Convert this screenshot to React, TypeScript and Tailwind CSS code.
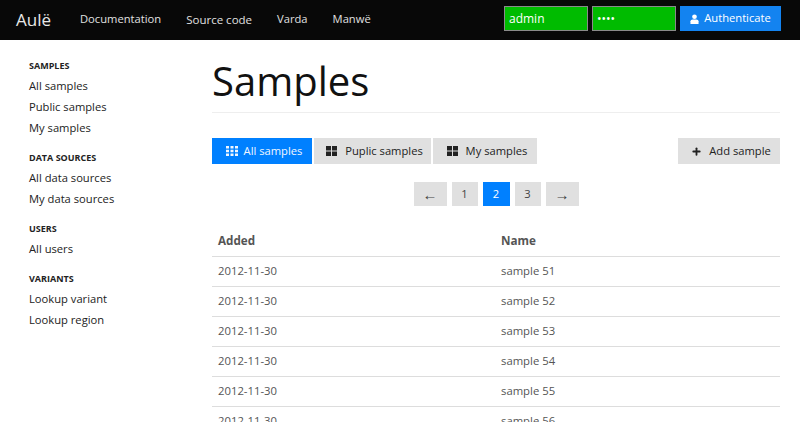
import { Plus } from 'lucide-react';

const font = "font-['Open_Sans',sans-serif]";

const sidebar = [
  { title: 'Samples', links: ['All samples', 'Public samples', 'My samples'] },
  { title: 'Data sources', links: ['All data sources', 'My data sources'] },
  { title: 'Users', links: ['All users'] },
  { title: 'Variants', links: ['Lookup variant', 'Lookup region'] },
];

const rows = [51, 52, 53, 54, 55, 56];

const Grid9 = () => (
  <svg width="12" height="10" viewBox="0 0 12 10" fill="currentColor">
    <rect x="0" y="0" width="3" height="2.5" />
    <rect x="4.5" y="0" width="3" height="2.5" />
    <rect x="9" y="0" width="3" height="2.5" />
    <rect x="0" y="3.75" width="3" height="2.5" />
    <rect x="4.5" y="3.75" width="3" height="2.5" />
    <rect x="9" y="3.75" width="3" height="2.5" />
    <rect x="0" y="7.5" width="3" height="2.5" />
    <rect x="4.5" y="7.5" width="3" height="2.5" />
    <rect x="9" y="7.5" width="3" height="2.5" />
  </svg>
);

const Grid4 = () => (
  <svg width="11" height="10" viewBox="0 0 11 10" fill="currentColor">
    <rect x="0" y="0" width="5" height="4.5" />
    <rect x="6" y="0" width="5" height="4.5" />
    <rect x="0" y="5.5" width="5" height="4.5" />
    <rect x="6" y="5.5" width="5" height="4.5" />
  </svg>
);

const App = () => {
  return (
    <div className={`${font} h-[422px] overflow-hidden bg-white`}>
      {/* Top bar */}
      <div className="flex h-10 items-center bg-[#080808] pl-4 pr-[19px]">
        <span className="w-16 text-[17px] text-[#e8e8e8]">Aulë</span>
        <nav className="flex gap-[25px] text-[11.2px] text-[#e0e0e0]">
          <span>Documentation</span>
          <span className="text-[11.5px]">Source code</span>
          <span>Varda</span>
          <span>Manwë</span>
        </nav>
        <div className="mb-[3px] ml-auto flex items-center gap-1">
          <div className="flex h-[25px] w-[84px] items-center border border-[#8a8a8a] bg-[#00bb00] px-1 text-[12px] text-white">
            admin
          </div>
          <div className="flex h-[25px] w-[84px] items-center border border-[#8a8a8a] bg-[#00bb00] px-1 text-xs text-white">
            ••••
          </div>
          <button className="flex h-[25px] w-[101px] items-center justify-center gap-[5px] bg-[#1383f0] text-[11.2px] text-white">
            <svg width="9" height="10" viewBox="0 0 10 11" fill="currentColor">
              <circle cx="5" cy="3" r="2.6" />
              <path d="M0.5 11 V8 Q0.5 6 3 6 H7 Q9.5 6 9.5 8 V11 Z" />
            </svg>
            Authenticate
          </button>
        </div>
      </div>

      <div className="flex">
        {/* Sidebar */}
        <aside className="w-[212px] shrink-0 pl-[29px] pt-[19px]">
          {sidebar.map((section) => (
            <div key={section.title} className="mb-[13px]">
              <div className="mb-[3px] text-[9px] font-bold uppercase leading-[13px] text-[#222]">
                {section.title}
              </div>
              {section.links.map((link) => (
                <div key={link} className="text-[11.2px] leading-[21px] text-[#222]">
                  {link}
                </div>
              ))}
            </div>
          ))}
        </aside>

        {/* Main */}
        <main className="w-[568px]">
          <h1 className="mt-[13px] h-[60px] border-b border-[#eeeeee] text-[40px] leading-[56px] text-[#111]">
            Samples
          </h1>

          <div className="mt-[25px] flex gap-0.5 text-[11.2px]">
            <button className="flex h-[26px] w-[100px] items-center justify-center gap-[6px] bg-[#0080ff] pl-1 text-[#f0f6ff]">
              <Grid9 />
              All samples
            </button>
            <button className="flex h-[26px] w-[117px] items-center justify-center gap-2 bg-[#e0e0e0] pl-1 text-[#222]">
              <Grid4 />
              Puplic samples
            </button>
            <button className="flex h-[26px] w-[104px] items-center justify-center gap-2 bg-[#e0e0e0] pl-1 text-[#222]">
              <Grid4 />
              My samples
            </button>
            <button className="ml-auto flex h-[26px] w-[102px] items-center justify-center gap-[7px] bg-[#e0e0e0] pl-1 text-[#222]">
              <Plus className="h-[11px] w-[11px]" strokeWidth={4} />
              Add sample
            </button>
          </div>

          <div className="mt-[18px] flex justify-center gap-[5px] text-[11.2px] text-[#444]">
            <span className="flex h-6 w-[33px] items-center justify-center bg-[#e0e0e0] text-[15px]">←</span>
            <span className="flex h-6 w-[26px] items-center justify-center bg-[#e0e0e0]">1</span>
            <span className="flex h-6 w-[27px] items-center justify-center bg-[#0080ff] text-white">2</span>
            <span className="flex h-6 w-[26px] items-center justify-center bg-[#e0e0e0]">3</span>
            <span className="flex h-6 w-[33px] items-center justify-center bg-[#e0e0e0] text-[15px]">→</span>
          </div>

          <table className="mt-5 w-full text-[11.3px] text-[#555]">
            <thead>
              <tr className="h-[30px] border-b border-[#dddddd] text-left">
                <th className="w-[283px] pl-[6px] pt-px text-[11.7px] font-bold">Added</th>
                <th className="pl-[6px] pt-px text-[11.7px] font-bold">Name</th>
              </tr>
            </thead>
            <tbody>
              {rows.map((n) => (
                <tr key={n} className="h-[30px] border-b border-[#dddddd]">
                  <td className="pl-[6px] pt-px">2012-11-30</td>
                  <td className="pl-[6px] pt-px">sample {n}</td>
                </tr>
              ))}
            </tbody>
          </table>
        </main>
      </div>
    </div>
  );
};

export default App;
